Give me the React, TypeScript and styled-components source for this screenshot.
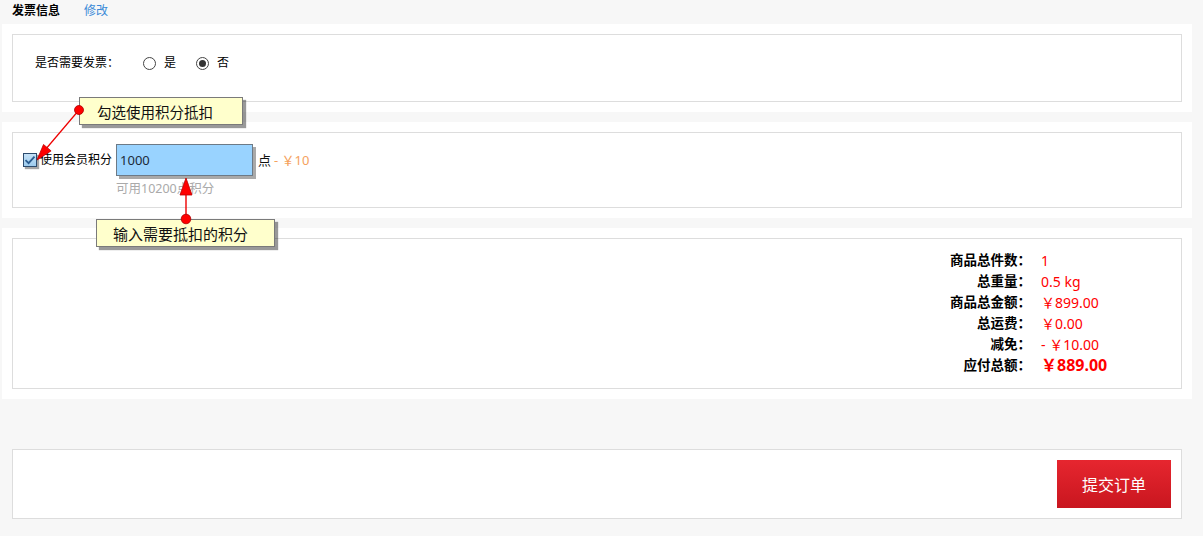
import React from "react";
import styled, { createGlobalStyle } from "styled-components";

const GlobalStyle = createGlobalStyle`
  html, body { margin: 0; padding: 0; background: #f7f7f7; }
  body {
    font-family: "Noto Sans", "Noto Sans CJK SC", sans-serif;
    font-size: 12px;
    color: #000;
  }
  * { box-sizing: border-box; }
`;

const Page = styled.div`
  position: relative;
  width: 1203px;
  height: 536px;
  padding: 0 11px 0 2px;
  overflow: hidden;
`;

const TitleBar = styled.div`
  height: 24px;
  display: flex;
  align-items: center;
  gap: 24px;
  padding-left: 10px;
  padding-bottom: 2px;
  line-height: 16px;
`;

const Title = styled.span`
  font-weight: bold;
  font-size: 12px;
`;

const EditLink = styled.a`
  color: #3a8ad8;
  font-size: 12px;
  text-decoration: none;
`;

const Section = styled.section<{ $plain?: boolean; $gap?: number }>`
  background: ${(p) => (p.$plain ? "transparent" : "#fff")};
  padding: 10px;
  margin-top: ${(p) => p.$gap ?? 0}px;
`;

const Box = styled.div<{ $h?: number }>`
  border: 1px solid #ddd;
  background: #fff;
  ${(p) => (p.$h ? `height: ${p.$h}px;` : "")}
`;

const InvoiceRow = styled.div`
  display: flex;
  align-items: center;
  padding: 19px 22px 0;
  line-height: 18px;
`;

const InvoiceLabel = styled.span`
  margin-right: 24px;
`;

const RadioLabel = styled.label`
  display: flex;
  align-items: center;
  gap: 8px;
  margin-right: 20px;
`;

const Radio = styled.span<{ $checked?: boolean }>`
  width: 13px;
  height: 13px;
  border-radius: 50%;
  border: 1px solid #444;
  background: #fff;
  display: flex;
  align-items: center;
  justify-content: center;
  &::after {
    content: "";
    width: 7px;
    height: 7px;
    border-radius: 50%;
    background: ${(p) => (p.$checked ? "#333" : "transparent")};
  }
`;

const PointsGrid = styled.div`
  display: grid;
  grid-template-columns: auto auto auto auto;
  justify-content: start;
  align-items: center;
  padding: 11px 10px 10px;
  line-height: 16px;
`;

const CheckBox = styled.span`
  width: 14px;
  height: 14px;
  border: 1px solid #2d4c6e;
  background: linear-gradient(#c6e2f7, #9ccbee);
  box-shadow: 2px 2px 1px rgba(0, 0, 0, 0.35);
  display: flex;
  align-items: center;
  justify-content: center;
  margin-right: 3px;
`;

const PointsLabel = styled.span`
  margin-right: 4px;
  font-size: 12px;
`;

const PointsInput = styled.div`
  width: 137px;
  height: 32px;
  background: #99d3ff;
  border: 1px solid #6d7a86;
  box-shadow: 3px 3px 0 #a9a9a9;
  padding-left: 3px;
  display: flex;
  align-items: center;
  font-size: 13px;
  color: #1c2a38;
  margin-right: 5px;
`;

const Unit = styled.span`
  font-size: 13px;
  color: #111;
`;

const Discount = styled.span`
  color: #f5a25d;
  font-size: 13px;
  margin-left: 3px;
`;

const Hint = styled.span`
  grid-column: 3;
  color: #aaa;
  font-size: 12.5px;
  margin-top: 5px;
`;

const Summary = styled.div`
  display: grid;
  grid-template-columns: auto 120px;
  grid-auto-rows: 21px;
  column-gap: 10px;
  justify-content: end;
  align-items: center;
  padding: 11px 20px 12px 0;
`;

const SumLabel = styled.span`
  text-align: right;
  font-weight: bold;
  font-size: 13.5px;
  line-height: 21px;
`;

const SumValue = styled.span<{ $big?: boolean }>`
  color: #f00;
  font-size: ${(p) => (p.$big ? "16px" : "14px")};
  font-weight: ${(p) => (p.$big ? "bold" : "normal")};
  line-height: 21px;
`;

const SubmitBar = styled.div`
  display: flex;
  justify-content: flex-end;
  padding: 10px;
`;

const SubmitButton = styled.button`
  width: 114px;
  height: 48px;
  border: none;
  background: linear-gradient(#e6262f, #c9161f);
  color: #fff;
  font-family: "Noto Sans CJK SC", sans-serif;
  font-size: 16px;
  cursor: pointer;
`;

const Callout = styled.div<{ $x: number; $y: number; $w: number; $fs: number; $pl: number }>`
  position: absolute;
  left: ${(p) => p.$x}px;
  top: ${(p) => p.$y}px;
  width: ${(p) => p.$w}px;
  height: 28px;
  background: #ffffcc;
  border: 1px solid #7a7a7a;
  box-shadow: 3px 3px 1px rgba(0, 0, 0, 0.4);
  padding-left: ${(p) => p.$pl}px;
  display: flex;
  align-items: center;
  font-family: "Noto Sans CJK SC", sans-serif;
  font-size: ${(p) => p.$fs}px;
  color: #111;
`;

const Overlay = styled.svg`
  position: absolute;
  left: 0;
  top: 0;
  pointer-events: none;
`;

const summary: [string, string, boolean?][] = [
  ["商品总件数：", "1"],
  ["总重量：", "0.5 kg"],
  ["商品总金额：", "￥899.00"],
  ["总运费：", "￥0.00"],
  ["减免：", "- ￥10.00"],
  ["应付总额：", "￥889.00", true],
];

export default function App() {
  return (
    <>
      <GlobalStyle />
      <Page>
        <TitleBar>
          <Title>发票信息</Title>
          <EditLink href="#">修改</EditLink>
        </TitleBar>

        <Section>
          <Box $h={68}>
            <InvoiceRow>
              <InvoiceLabel>是否需要发票：</InvoiceLabel>
              <RadioLabel>
                <Radio />
                是
              </RadioLabel>
              <RadioLabel>
                <Radio $checked />
                否
              </RadioLabel>
            </InvoiceRow>
          </Box>
        </Section>

        <Section $gap={10}>
          <Box>
            <PointsGrid>
              <CheckBox>
                <svg width="12" height="12" viewBox="0 0 12 12">
                  <path d="M1.5 6.2 L4.6 9.2 L10.5 2.6" fill="none" stroke="#2b5d90" strokeWidth="1.8" />
                </svg>
              </CheckBox>
              <PointsLabel>使用会员积分</PointsLabel>
              <PointsInput>1000</PointsInput>
              <span>
                <Unit>点</Unit>
                <Discount>- ￥10</Discount>
              </span>
              <Hint>可用10200点积分</Hint>
            </PointsGrid>
          </Box>
        </Section>

        <Section $gap={10}>
          <Box>
            <Summary>
              {summary.map(([label, value, big]) => (
                <React.Fragment key={label}>
                  <SumLabel>{label}</SumLabel>
                  <SumValue $big={big}>{value}</SumValue>
                </React.Fragment>
              ))}
            </Summary>
          </Box>
        </Section>

        <Section $plain $gap={40}>
          <Box>
            <SubmitBar>
              <SubmitButton>提交订单</SubmitButton>
            </SubmitBar>
          </Box>
        </Section>

        <Callout $x={79} $y={97} $w={164} $fs={14.5} $pl={17}>勾选使用积分抵扣</Callout>
        <Callout $x={96} $y={219} $w={179} $fs={15} $pl={16}>输入需要抵扣的积分</Callout>

        <Overlay width="1203" height="536" viewBox="0 0 1203 536">
          <line x1="79" y1="110" x2="45" y2="150" stroke="#e00" strokeWidth="1.2" />
          <polygon points="37,160 51.1,150.9 43.5,144.5" fill="#f00" stroke="#b00" strokeWidth="0.8" />
          <circle cx="79" cy="110" r="4.5" fill="#f00" stroke="#a00" strokeWidth="0.8" />
          <line x1="186" y1="219" x2="186" y2="194" stroke="#e00" strokeWidth="1.4" />
          <polygon points="186,178 180,195 192,195" fill="#f00" stroke="#b00" strokeWidth="0.8" />
          <circle cx="186" cy="219" r="4.8" fill="#f00" stroke="#a00" strokeWidth="0.8" />
        </Overlay>
      </Page>
    </>
  );
}
